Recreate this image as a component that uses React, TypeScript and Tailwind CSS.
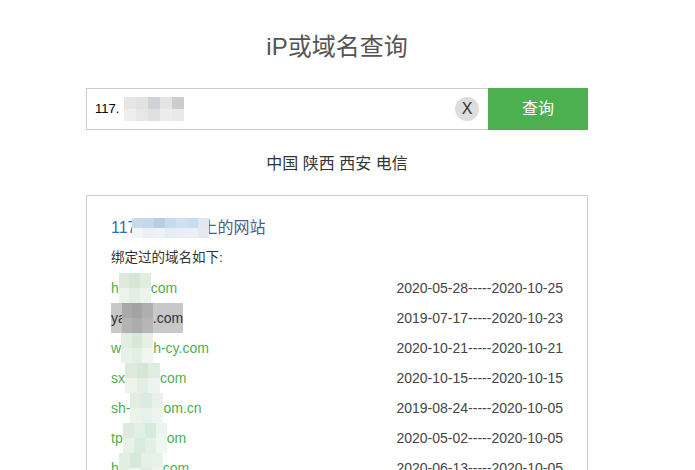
import React from "react";

type MosaicProps = {w: number; h: number; cols: number; colors: string[]; className?: string};

// pixelated blur blocks that hide parts of the text
const Mosaic = ({w, h, cols, colors, className}: MosaicProps) => {
    return (
        <span
            className={"relative z-10 inline-grid align-middle " + (className ?? "")}
            style={{width: w, height: h, gridTemplateColumns: `repeat(${cols}, 1fr)`}}
        >
            {colors.map((c, i) => (
                <span key={i} style={{background: c}}/>
            ))}
        </span>
    );
};

const greenA = ["#dce9dc", "#d4e6d4", "#e0ede0", "#ebf3eb", "#e3efe3", "#edf4ed"];
const greenB = ["#e1eee1", "#d6e8d6", "#e6f0e6", "#e9f2ea", "#e4efe4", "#f0f5f0"];

const rows = [
    {pre: "h", post: "com", mw: 32, cols: 3, colors: greenA, dates: "2020-05-28-----2020-10-25"},
    {pre: "ya", post: ".com", mw: 31, cols: 3, colors: ["#a9a9a9", "#a3a3a3", "#aeaeae", "#b3b3b3", "#acacac", "#b6b6b6"], dates: "2019-07-17-----2020-10-23", gray: true},
    {pre: "w", post: "h-cy.com", mw: 32, cols: 3, colors: greenB, dates: "2020-10-21-----2020-10-21"},
    {pre: "sx", post: "com", mw: 35, cols: 3, colors: greenA, dates: "2020-10-15-----2020-10-15"},
    {pre: "sh-", post: "om.cn", mw: 33, cols: 3, colors: ["#e3eee3", "#dcebe2", "#e8f2ec", "#eef3ea", "#e6f1ee", "#eef5f0"], dates: "2019-08-24-----2020-10-05"},
    {pre: "tp", post: "om", mw: 44, cols: 4, colors: ["#dcebdc", "#e4efe4", "#d6eae0", "#edf4ed", "#e9f2e9", "#d9ebdc", "#e2efe7", "#f0f6f0"], dates: "2020-05-02-----2020-10-05"},
    {pre: "h", post: "com", mw: 44, cols: 4, colors: greenB.concat(["#e0ede0", "#eef4ee"]), dates: "2020-06-13-----2020-10-05"},
];

export default function App() {
    return (
        <div
            className="w-[695px] h-[470px] overflow-hidden bg-white"
            style={{fontFamily: '"Liberation Sans", "Noto Sans CJK SC", sans-serif'}}
        >
            <div className="ml-[86px] w-[502px] pt-[29px]">
                <h1 className="text-center text-[24px] leading-[36px] text-[#555]">iP或域名查询</h1>

                <div className="mt-[23px] flex h-[42px]">
                    <div className="flex flex-1 items-center border border-r-0 border-[#cccccc] pl-[8px] pr-[9px]">
                        <span className="text-[13px] text-black">117.</span>
                        <Mosaic
                            w={60}
                            h={24}
                            cols={5}
                            className="ml-[5px]"
                            colors={["#e6e6e6", "#e2e2e0", "#cfd3d7", "#e5e5e5", "#cfcccf", "#eeeeee", "#e7e7e7", "#e0e0e0", "#ececec", "#e9e9e9"]}
                        />
                        <div className="flex-1"/>
                        <button className="flex h-[24px] w-[24px] items-center justify-center rounded-full bg-[#dddddd] text-[16px] text-[#333]">
                            X
                        </button>
                    </div>
                    <button className="w-[100px] bg-[#4caf50] text-[16px] text-white">查询</button>
                </div>

                <p className="mt-[22px] text-center text-[16px] leading-[24px] text-[#333]">中国 陕西 西安 电信</p>

                <div className="mt-[19px] h-[300px] border border-[#cccccc] px-[24px] pt-[20px]">
                    <div className="flex items-center text-[16px] leading-[24px] text-[#4a5d85]">
                        <span className="text-[#2f6fb8]">117</span>
                        <Mosaic
                            w={77}
                            h={20}
                            cols={7}
                            className="-ml-[5px] -mr-[7px]"
                            colors={["#c8d9ec", "#c4d7ec", "#b9cde4", "#c6dbef", "#cfe0f1", "#c9dcf0", "#e2e8ef", "#f1f5fa", "#eaf0f7", "#edf2f8", "#e4ecf5", "#e7eef6", "#ebf0f6", "#e6e9ed"]}
                        />
                        <span>上的网站</span>
                    </div>
                    <p className="mt-[8px] text-[13.5px] leading-[20px] text-[#333]">绑定过的域名如下:</p>
                    <div className="mt-[5px]">
                        {rows.map((r, i) => (
                            <div key={i} className="flex h-[30px] items-center justify-between">
                                <span
                                    className={
                                        r.gray
                                            ? "flex h-[30px] items-center bg-[#c8c8c8] text-[14px] text-[#333]"
                                            : "flex items-center text-[14px] text-[#4caf50]"
                                    }
                                >
                                    <span>{r.pre}</span>
                                    <Mosaic
                                        w={r.mw}
                                        h={30}
                                        cols={r.cols}
                                        colors={r.colors}
                                        className={r.gray ? "-ml-[4px]" : ""}
                                    />
                                    <span>{r.post}</span>
                                </span>
                                <span className="text-[14px] text-[#444]">{r.dates}</span>
                            </div>
                        ))}
                    </div>
                </div>
            </div>
        </div>
    );
}
